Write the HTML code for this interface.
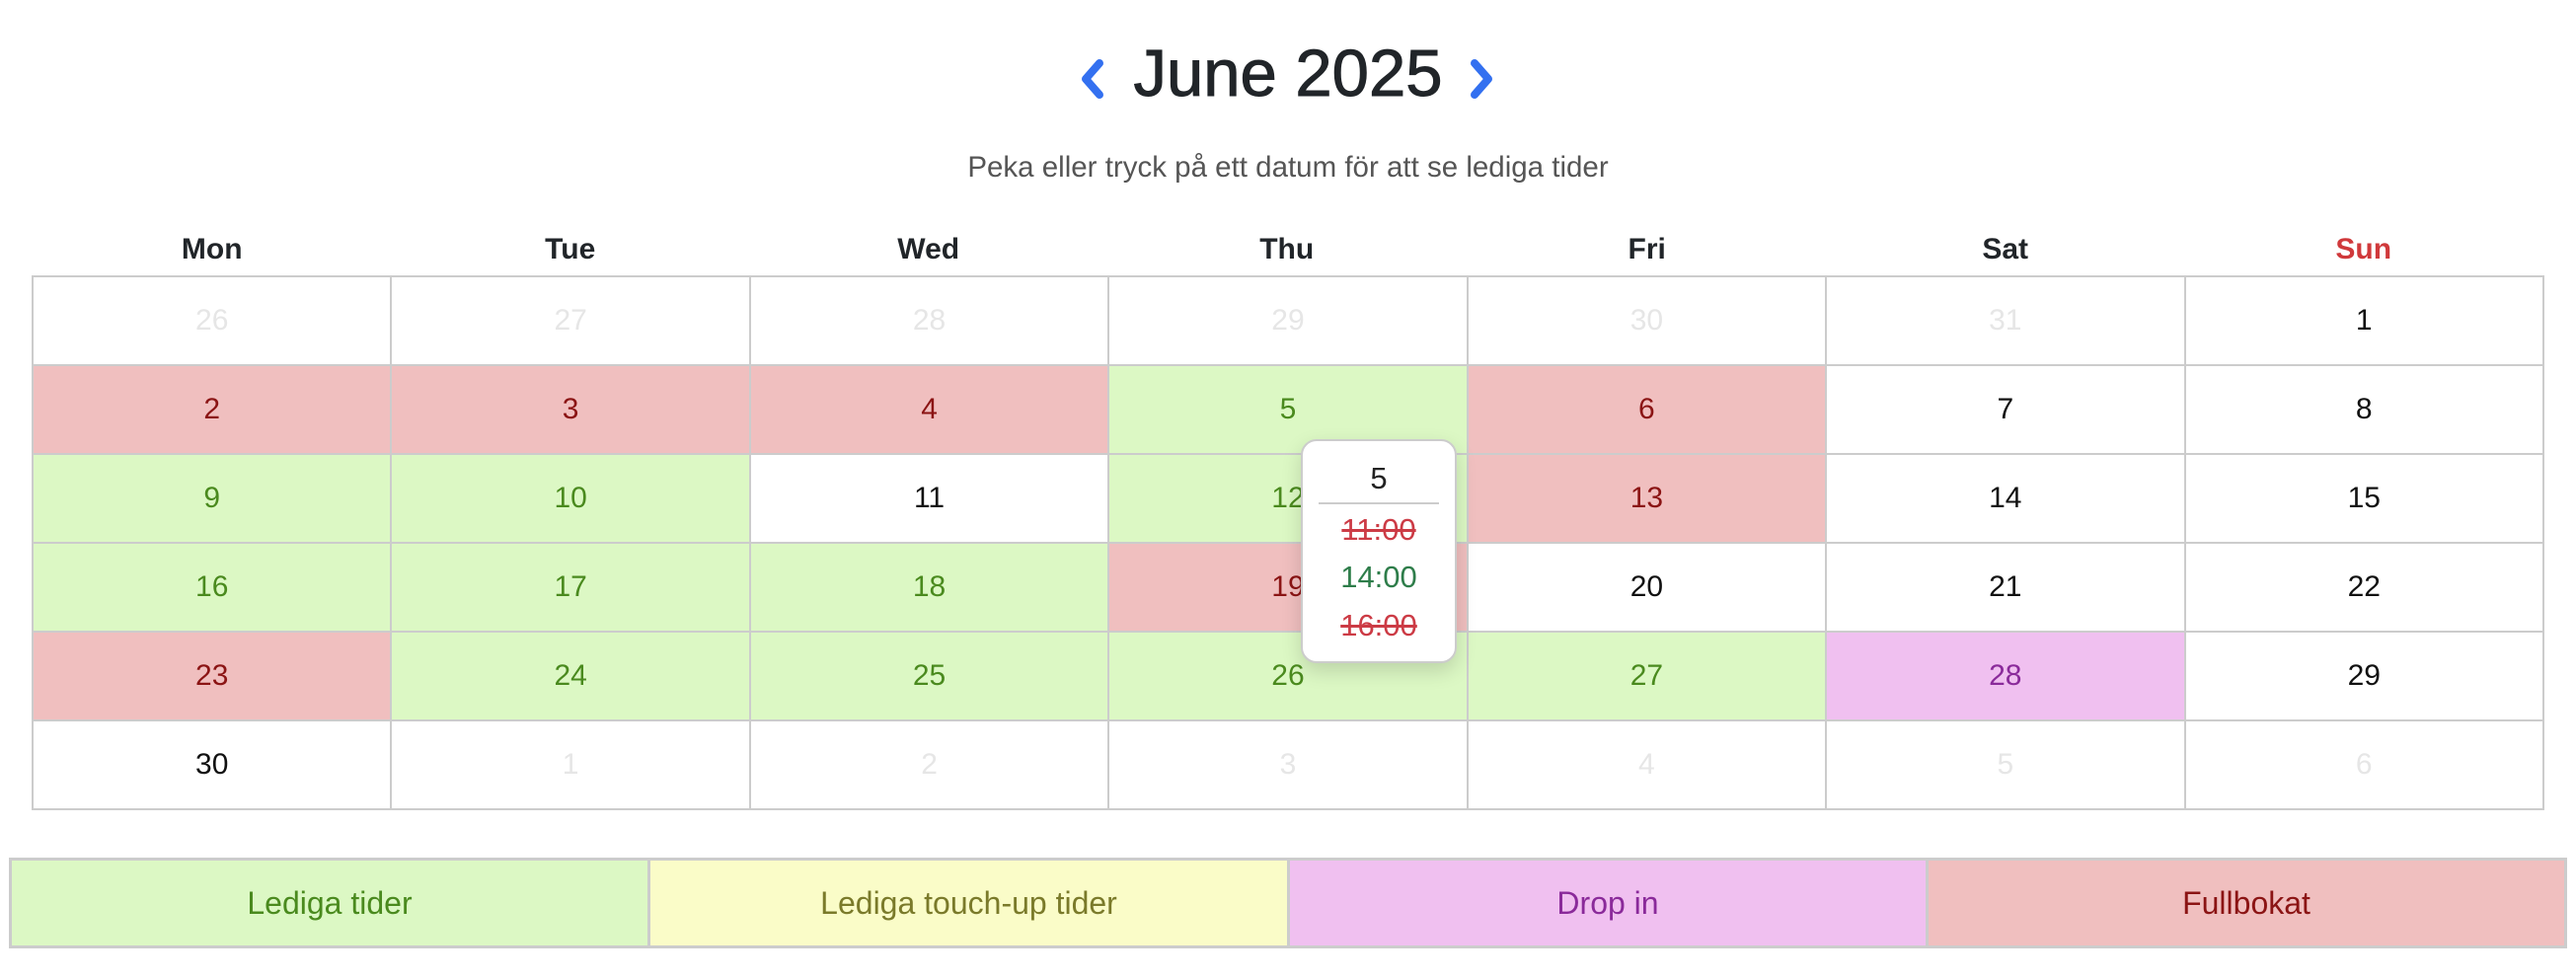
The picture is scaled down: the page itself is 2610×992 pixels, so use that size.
<!DOCTYPE html>
<html><head><meta charset="utf-8"><style>
*{box-sizing:border-box;margin:0;padding:0}
body{width:2610px;height:992px;background:#fff;font-family:"Liberation Sans",sans-serif;position:relative;overflow:hidden;color:#111}
.title{position:absolute;left:0;width:2610px;top:30px;text-align:center;font-size:67px;color:#212529;line-height:90px;-webkit-text-stroke:1px #212529}
.sub{position:absolute;left:0;width:2610px;top:153px;text-align:center;font-size:29.5px;color:#555}
.wd{position:absolute;top:236px;width:363.4px;text-align:center;font-size:30px;font-weight:bold;color:#212529}
.grid{position:absolute;left:32px;top:279px;width:2546px;height:541px;border-collapse:collapse;table-layout:fixed}
.grid td{border:2px solid #ccc;height:90px;text-align:center;font-size:30px;color:#111}
.o{color:#e6e6e6!important}
.g{background:#dcf8c4;color:#4a8a1e!important}
.r{background:#f0bfbf;color:#8b1414!important}
.p{background:#f0c0f0;color:#8a2a9a!important}
.pop{position:absolute;left:1318px;top:445px;width:158px;height:227px;background:#fff;border:2px solid #ccc;border-radius:16px;box-shadow:0 8px 20px rgba(0,0,0,.15);text-align:center;font-size:31px}
.leg{position:absolute;top:869px;height:92px;border:3px solid #ccc;text-align:center;line-height:86px;font-size:32px}
</style></head><body>
<svg style="position:absolute;left:1090px;top:58px" width="32" height="44" viewBox="0 0 32 44"><path d="M24 6 L10 22 L24 38" fill="none" stroke="#3370f0" stroke-width="8" stroke-linecap="round" stroke-linejoin="round"/></svg>
<svg style="position:absolute;left:1486px;top:58px" width="32" height="44" viewBox="0 0 32 44"><path d="M8 6 L22 22 L8 38" fill="none" stroke="#3370f0" stroke-width="8" stroke-linecap="round" stroke-linejoin="round"/></svg>
<div class="title">June 2025</div>
<div class="sub">Peka eller tryck på ett datum för att se lediga tider</div>
<div class="wd" style="left:33px">Mon</div>
<div class="wd" style="left:396px">Tue</div>
<div class="wd" style="left:759px">Wed</div>
<div class="wd" style="left:1122px">Thu</div>
<div class="wd" style="left:1487px">Fri</div>
<div class="wd" style="left:1850px">Sat</div>
<div class="wd" style="left:2213px;color:#d0393b">Sun</div>
<table class="grid">
<tr><td class="o">26</td><td class="o">27</td><td class="o">28</td><td class="o">29</td><td class="o">30</td><td class="o">31</td><td>1</td></tr>
<tr><td class="r">2</td><td class="r">3</td><td class="r">4</td><td class="g">5</td><td class="r">6</td><td>7</td><td>8</td></tr>
<tr><td class="g">9</td><td class="g">10</td><td>11</td><td class="g">12</td><td class="r">13</td><td>14</td><td>15</td></tr>
<tr><td class="g">16</td><td class="g">17</td><td class="g">18</td><td class="r">19</td><td>20</td><td>21</td><td>22</td></tr>
<tr><td class="r">23</td><td class="g">24</td><td class="g">25</td><td class="g">26</td><td class="g">27</td><td class="p">28</td><td>29</td></tr>
<tr><td>30</td><td class="o">1</td><td class="o">2</td><td class="o">3</td><td class="o">4</td><td class="o">5</td><td class="o">6</td></tr>
</table>
<div class="pop">
<div style="position:absolute;top:20px;width:100%;color:#222">5</div>
<div style="position:absolute;top:62px;left:16px;right:16px;border-top:2px solid #ccc"></div>
<div style="position:absolute;top:72px;width:100%;color:#cc3b45;text-decoration:line-through">11:00</div>
<div style="position:absolute;top:120px;width:100%;color:#2e7d4a">14:00</div>
<div style="position:absolute;top:169px;width:100%;color:#cc3b45;text-decoration:line-through">16:00</div>
</div>
<div class="leg" style="left:9px;width:650px;background:#dcf8c4;color:#4a8a1e">Lediga tider</div>
<div class="leg" style="left:656px;width:651px;background:#fafcc8;color:#7a7a2a">Lediga touch-up tider</div>
<div class="leg" style="left:1304px;width:650px;background:#f0c0f0;color:#8a2a9a">Drop in</div>
<div class="leg" style="left:1951px;width:650px;background:#f0bfbf;color:#8b1414">Fullbokat</div>
</body></html>
